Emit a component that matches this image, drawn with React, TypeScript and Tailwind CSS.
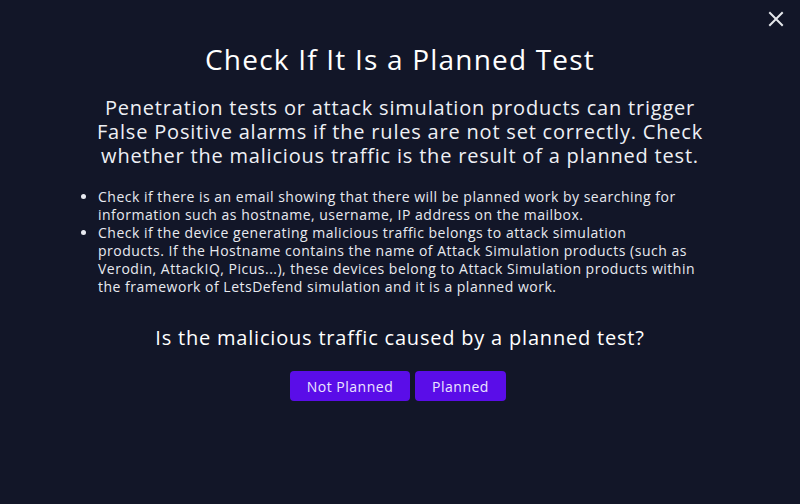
import React from 'react';

function CloseIcon() {
  return (
    <svg width="16" height="16" viewBox="0 0 16 16" fill="none" stroke="currentColor" strokeWidth="2" strokeLinecap="square">
      <path d="M2 2 L14 14 M14 2 L2 14" />
    </svg>
  );
}

export default function App() {
  return (
    <div
      className="relative w-full h-[504px] bg-[#121628] text-white overflow-hidden"
      style={{ fontFamily: '"Open Sans", "Noto Sans", sans-serif' }}
    >
      <button className="absolute top-[11px] right-[16px] text-[#e5e7eb] cursor-pointer">
        <CloseIcon />
      </button>

      <div className="flex flex-col items-center pt-[40px]">
        <h1 className="text-[28px] leading-[38px] font-medium tracking-[1.2px] text-center">Check If It Is a Planned Test</h1>

        <p className="mt-[18px] text-[20px] leading-[24px] tracking-[0.8px] text-center text-[#eef0f5]">
          Penetration tests or attack simulation products can trigger<br />
          False Positive alarms if the rules are not set correctly. Check<br />
          whether the malicious traffic is the result of a planned test.
        </p>

        <ul className="mt-[20px] w-[640px] pl-[18px] list-disc text-[14px] leading-[18px] tracking-[0.5px] text-[#e8eaf0]">
          <li>
            Check if there is an email showing that there will be planned work by searching for<br />
            information such as hostname, username, IP address on the mailbox.
          </li>
          <li>
            Check if the device generating malicious traffic belongs to attack simulation<br />
            products. If the Hostname contains the name of Attack Simulation products (such as<br />
            Verodin, AttackIQ, Picus...), these devices belong to Attack Simulation products within<br />
            the framework of LetsDefend simulation and it is a planned work.
          </li>
        </ul>

        <h2 className="mt-[29px] text-[20px] leading-[26px] tracking-[0.8px] text-center">Is the malicious traffic caused by a planned test?</h2>

        <div className="mt-[20px] mr-[4px] flex gap-[5px]">
          <button className="h-[30px] w-[120px] rounded-[4px] bg-[#5a0de8] text-[14px] tracking-[0.5px] text-[#ece6ff]">Not Planned</button>
          <button className="h-[30px] w-[91px] rounded-[4px] bg-[#5a0de8] text-[14px] tracking-[0.5px] text-[#ece6ff]">Planned</button>
        </div>
      </div>
    </div>
  );
}
